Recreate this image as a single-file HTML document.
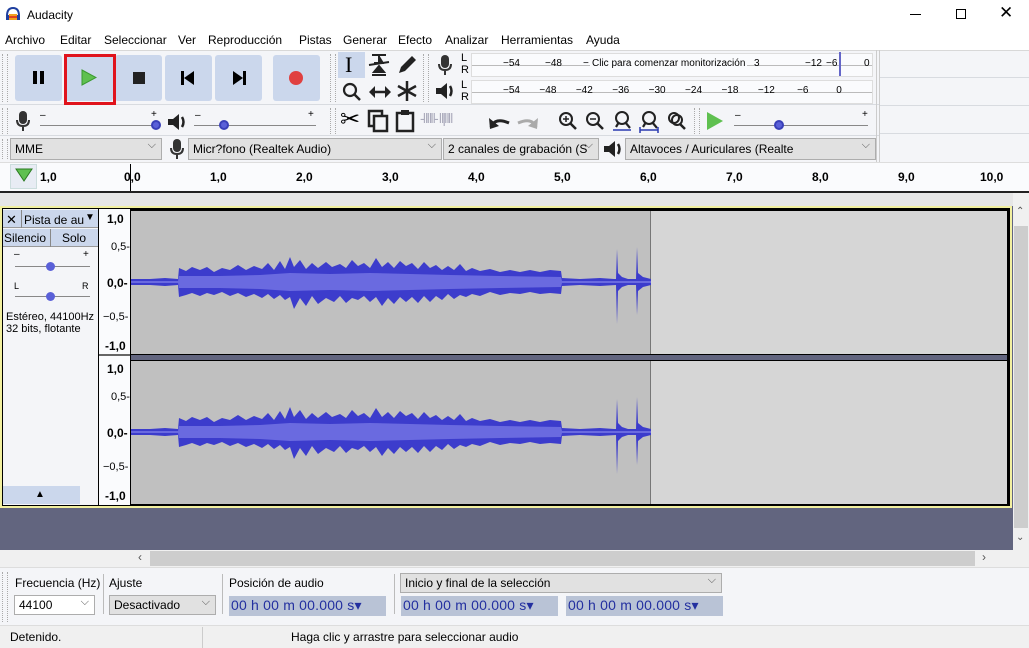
<!DOCTYPE html>
<html><head><meta charset="utf-8"><style>
*{box-sizing:border-box;margin:0;padding:0}
body{width:1029px;height:648px;overflow:hidden;background:#f0f0f0;font-family:"Liberation Sans",sans-serif;font-size:12px;color:#000;position:relative}
.a{position:absolute}
.btn{position:absolute;background:#cbd7ec;border-radius:3px}
.grip{position:absolute;width:6px;border-left:1px dotted #aaa;border-right:1px dotted #aaa}
.sel{position:absolute;background:#e1e1e1;border:1px solid #adadad;height:22px;font-size:12px;padding:3px 4px;white-space:nowrap;overflow:hidden}
.sel:after{content:"⌵";position:absolute;right:5px;top:0;color:#555;font-size:11px}
.tc{position:absolute;background:#b9c3d6;color:#2330a0;font-size:14px;height:20px;padding:1px 2px;white-space:nowrap;letter-spacing:0.2px}
.rl{position:absolute;font-size:12px;font-weight:bold;top:170px}
.sm{font-size:11px}
.m{position:absolute;font-size:10px}
</style></head><body>
<div class="a" style="left:0;top:0;width:1029px;height:30px;background:#fff"></div>
<svg class="a" style="left:5px;top:7px" width="16" height="14" viewBox="0 0 16 14"><path d="M2 9 Q2 1 8 1 Q14 1 14 9" fill="none" stroke="#1f3f9f" stroke-width="2"/><rect x="1" y="8" width="3" height="5" fill="#1f3f9f"/><rect x="12" y="8" width="3" height="5" fill="#1f3f9f"/><rect x="4" y="7" width="8" height="6" fill="#f0a020"/><rect x="4" y="9" width="8" height="2" fill="#e04020"/></svg>
<div class="a" style="left:27px;top:8px;font-size:12px">Audacity</div>
<div class="a" style="left:910px;top:14px;width:11px;height:1px;background:#000"></div>
<div class="a" style="left:956px;top:9px;width:10px;height:10px;border:1px solid #000"></div>
<div class="a" style="left:999px;top:3px;font-size:17px;font-weight:300">✕</div>
<div class="a" style="left:0;top:30px;width:1029px;height:20px;background:#fff"></div>
<div class="a" style="top:33px;left:5px">Archivo</div>
<div class="a" style="top:33px;left:60px">Editar</div>
<div class="a" style="top:33px;left:104px">Seleccionar</div>
<div class="a" style="top:33px;left:178px">Ver</div>
<div class="a" style="top:33px;left:208px">Reproducción</div>
<div class="a" style="top:33px;left:299px">Pistas</div>
<div class="a" style="top:33px;left:343px">Generar</div>
<div class="a" style="top:33px;left:398px">Efecto</div>
<div class="a" style="top:33px;left:445px">Analizar</div>
<div class="a" style="top:33px;left:501px">Herramientas</div>
<div class="a" style="top:33px;left:586px">Ayuda</div>
<div class="a" style="left:0;top:50px;width:1029px;height:113px;background:#f4f5f8;border-top:1px solid #d8d8d8"></div>
<div class="a" style="left:0;top:104px;width:880px;height:1px;background:#d8dbe0"></div>
<div class="a" style="left:0;top:135px;width:880px;height:1px;background:#d8dbe0"></div>
<div class="a" style="left:876px;top:50px;width:1px;height:112px;background:#ccc"></div>
<div class="a" style="left:879px;top:50px;width:1px;height:112px;background:#ccc"></div>
<div class="a" style="left:880px;top:77px;width:149px;height:1px;background:#d8dbe0"></div>
<div class="a" style="left:880px;top:105px;width:149px;height:1px;background:#d8dbe0"></div>
<div class="a" style="left:880px;top:133px;width:149px;height:1px;background:#d8dbe0"></div>
<div class="grip" style="left:2px;top:54px;height:48px"></div>
<div class="btn" style="left:15px;top:55px;width:47px;height:46px"></div>
<div class="btn" style="left:65px;top:55px;width:48px;height:46px"></div>
<div class="btn" style="left:115px;top:55px;width:47px;height:46px"></div>
<div class="btn" style="left:165px;top:55px;width:47px;height:46px"></div>
<div class="btn" style="left:215px;top:55px;width:47px;height:46px"></div>
<div class="btn" style="left:273px;top:55px;width:47px;height:46px"></div>
<div class="a" style="left:64px;top:54px;width:52px;height:51px;border:3px solid #e0131c"></div>
<div class="a" style="left:33px;top:71px;width:4px;height:13px;background:#000"></div>
<div class="a" style="left:40px;top:71px;width:4px;height:13px;background:#000"></div>
<svg class="a" style="left:81px;top:69px" width="16" height="17"><path d="M1 1 L15 8.5 L1 16Z" fill="#5fc050" stroke="#3a9a30"/></svg>
<div class="a" style="left:133px;top:72px;width:12px;height:12px;background:#222"></div>
<svg class="a" style="left:181px;top:71px" width="14" height="14"><rect x="0" y="0" width="3" height="14"/><path d="M13 0 L3 7 L13 14Z"/></svg>
<svg class="a" style="left:232px;top:71px" width="14" height="14"><rect x="11" y="0" width="3" height="14"/><path d="M1 0 L11 7 L1 14Z"/></svg>
<div class="a" style="left:289px;top:71px;width:14px;height:14px;border-radius:50%;background:#e04040"></div>
<div class="grip" style="left:330px;top:54px;height:48px"></div>
<div class="a" style="left:338px;top:52px;width:27px;height:26px;background:#cbd7ec"></div>
<div class="a" style="left:345px;top:52px;font-size:22px;font-family:'Liberation Serif',serif">I</div>
<svg class="a" style="left:366px;top:53px" width="27" height="24"><path d="M6 2h14M13 2v8l-5 0 5-0 5 0M3 12l20-3M8 19l5-6 5 6zM6 22h14" stroke="#222" stroke-width="2" fill="#222"/></svg>
<svg class="a" style="left:396px;top:55px" width="22" height="20"><path d="M3 18l2-6 11-11 4 4-11 11z" fill="#222"/></svg>
<svg class="a" style="left:341px;top:81px" width="22" height="22"><circle cx="9" cy="9" r="6" fill="none" stroke="#222" stroke-width="2.2"/><path d="M13 13l6 6" stroke="#222" stroke-width="2.5"/></svg>
<svg class="a" style="left:368px;top:82px" width="24" height="20"><path d="M4 10h16" stroke="#222" stroke-width="2.5"/><path d="M1 10l6-6v12zM23 10l-6-6v12z" fill="#222"/></svg>
<svg class="a" style="left:396px;top:80px" width="22" height="22"><path d="M11 1v20M2 6l18 10M2 16l18-10" stroke="#222" stroke-width="2.5"/></svg>
<div class="grip" style="left:423px;top:54px;height:48px"></div>
<svg class="a" style="left:437px;top:54px" width="16" height="22"><rect x="4" y="1" width="8" height="13" rx="4" fill="#333"/><path d="M2 10q0 6 6 6q6 0 6-6M8 16v5" fill="none" stroke="#333" stroke-width="2"/></svg>
<svg class="a" style="left:434px;top:81px" width="22" height="20"><path d="M2 7h5l6-5v16l-6-5H2z" fill="#222"/><path d="M16 5q3 5 0 10" stroke="#222" stroke-width="2.5" fill="none"/></svg>
<div class="a sm" style="left:461px;top:52px;line-height:12px">L<br>R</div>
<div class="a sm" style="left:461px;top:79px;line-height:12px">L<br>R</div>
<div class="a" style="left:471px;top:53px;width:402px;height:24px;background:#fafbfd;border:1px solid #ddd"></div>
<div class="a" style="left:471px;top:80px;width:402px;height:24px;background:#fafbfd;border:1px solid #ddd"></div>
<div class="a" style="left:472px;top:65px;width:400px;height:1px;background:#bbb"></div>
<div class="a" style="left:472px;top:92px;width:400px;height:1px;background:#bbb"></div>
<div class="a" style="left:839px;top:52px;width:2px;height:24px;background:#6466c8"></div>
<div class="m" style="left:503px;top:58px">−54</div>
<div class="m" style="left:545px;top:58px">−48</div>
<div class="m" style="left:583px;top:58px">−</div>
<div class="m" style="left:590px;top:58px;background:#fafbfd;padding:0 2px">Clic para comenzar monitorización</div>
<div class="m" style="left:754px;top:58px">3</div>
<div class="m" style="left:805px;top:58px">−12</div>
<div class="m" style="left:826px;top:58px">−6</div>
<div class="m" style="left:864px;top:58px">0</div>
<div class="a" style="left:503px;top:85px;font-size:10px;white-space:pre">−54       −48       −42       −36       −30       −24       −18       −12        −6          0</div>
<div class="grip" style="left:2px;top:108px;height:26px"></div>
<svg class="a" style="left:15px;top:110px" width="16" height="22"><rect x="4" y="1" width="8" height="13" rx="4" fill="#333"/><path d="M2 10q0 6 6 6q6 0 6-6M8 16v5" fill="none" stroke="#333" stroke-width="2"/></svg>
<div class="a" style="left:40px;top:125px;width:118px;height:1px;background:#888"></div>
<div class="a" style="left:40px;top:110px;font-size:10px">–</div><div class="a" style="left:151px;top:109px;font-size:10px">+</div>
<div class="a" style="left:151px;top:120px;width:10px;height:10px;border-radius:50%;background:#5a60d8;border:2px solid #3a40b8"></div>
<svg class="a" style="left:166px;top:112px" width="22" height="20"><path d="M2 7h5l6-5v16l-6-5H2z" fill="#222"/><path d="M16 5q3 5 0 10" stroke="#222" stroke-width="2.5" fill="none"/></svg>
<div class="a" style="left:194px;top:125px;width:122px;height:1px;background:#888"></div>
<div class="a" style="left:195px;top:110px;font-size:10px">–</div><div class="a" style="left:308px;top:109px;font-size:10px">+</div>
<div class="a" style="left:219px;top:120px;width:10px;height:10px;border-radius:50%;background:#5a60d8;border:2px solid #3a40b8"></div>
<div class="grip" style="left:330px;top:108px;height:26px"></div>
<div class="a" style="left:340px;top:106px;font-size:24px;line-height:28px">✂</div>
<svg class="a" style="left:367px;top:109px" width="24" height="24"><rect x="2" y="2" width="13" height="15" fill="none" stroke="#222" stroke-width="2.5"/><rect x="7" y="7" width="13" height="15" fill="#f4f5f8" stroke="#222" stroke-width="2.5"/></svg>
<svg class="a" style="left:394px;top:109px" width="22" height="24"><rect x="3" y="4" width="16" height="18" fill="none" stroke="#222" stroke-width="2.5"/><rect x="7" y="1" width="8" height="5" fill="#222"/></svg>
<div class="a" style="left:420px;top:110px;color:#aab;font-size:14px;letter-spacing:-2px">-‖‖‖- ‖|‖‖</div>
<svg class="a" style="left:488px;top:113px" width="24" height="18"><path d="M3 14q4-10 18-4" stroke="#222" stroke-width="3" fill="none"/><path d="M1 5l1 11 9-3z" fill="#222"/></svg>
<svg class="a" style="left:515px;top:113px" width="24" height="18"><path d="M21 14q-4-10-18-4" stroke="#aaa" stroke-width="3" fill="none"/><path d="M23 5l-1 11-9-3z" fill="#aaa"/></svg>
<svg class="a" style="left:557px;top:110px" width="22" height="22"><circle cx="9" cy="9" r="6" fill="none" stroke="#222" stroke-width="2"/><path d="M13 13l6 6" stroke="#222" stroke-width="2.5"/><path d="M6 9h6M9 6v6" stroke="#222" stroke-width="1.5"/></svg>
<svg class="a" style="left:584px;top:110px" width="22" height="22"><circle cx="9" cy="9" r="6" fill="none" stroke="#222" stroke-width="2"/><path d="M13 13l6 6" stroke="#222" stroke-width="2.5"/><path d="M6 9h6" stroke="#222" stroke-width="1.5"/></svg>
<svg class="a" style="left:611px;top:110px" width="24" height="24"><circle cx="11" cy="8" r="6" fill="none" stroke="#222" stroke-width="2"/><path d="M14 12l5 6M8 12l-3 5" stroke="#222" stroke-width="2.2"/><path d="M2 20h18" stroke="#2a3ab0" stroke-width="1.5"/></svg>
<svg class="a" style="left:638px;top:110px" width="24" height="24"><circle cx="11" cy="8" r="6" fill="none" stroke="#222" stroke-width="2"/><path d="M14 12l5 6M8 12l-3 5" stroke="#222" stroke-width="2.2"/><path d="M2 20h18M2 17v6M20 17v6" stroke="#2a3ab0" stroke-width="1.5"/></svg>
<svg class="a" style="left:666px;top:110px" width="22" height="22"><circle cx="8" cy="8" r="5" fill="none" stroke="#222" stroke-width="2"/><circle cx="11" cy="10" r="5" fill="none" stroke="#222" stroke-width="2"/><path d="M14 14l5 5" stroke="#222" stroke-width="2.5"/></svg>
<div class="grip" style="left:694px;top:108px;height:26px"></div>
<svg class="a" style="left:706px;top:111px" width="18" height="20"><path d="M1 1L17 10 1 19z" fill="#5fc050"/></svg>
<div class="a" style="left:734px;top:125px;width:134px;height:1px;background:#888"></div>
<div class="a" style="left:735px;top:110px;font-size:10px">–</div><div class="a" style="left:862px;top:109px;font-size:10px">+</div>
<div class="a" style="left:774px;top:120px;width:10px;height:10px;border-radius:50%;background:#5a60d8;border:2px solid #3a40b8"></div>
<div class="grip" style="left:2px;top:139px;height:20px"></div>
<div class="sel" style="left:10px;top:138px;width:152px">MME</div>
<svg class="a" style="left:169px;top:138px" width="16" height="22"><rect x="4" y="1" width="8" height="13" rx="4" fill="#333"/><path d="M2 10q0 6 6 6q6 0 6-6M8 16v5" fill="none" stroke="#333" stroke-width="2"/></svg>
<div class="sel" style="left:188px;top:138px;width:254px">Micr?fono (Realtek Audio)</div>
<div class="sel" style="left:443px;top:138px;width:156px">2 canales de grabación (S</div>
<svg class="a" style="left:602px;top:139px" width="22" height="20"><path d="M2 7h5l6-5v16l-6-5H2z" fill="#222"/><path d="M16 5q3 5 0 10" stroke="#222" stroke-width="2.5" fill="none"/></svg>
<div class="sel" style="left:625px;top:138px;width:251px">Altavoces / Auriculares (Realte</div>
<div class="a" style="left:0;top:162px;width:1029px;height:30px;background:#fafbfd;border-top:1px solid #ddd"></div>
<div class="a" style="left:0;top:191px;width:1029px;height:2px;background:#222"></div>
<div class="a" style="left:10px;top:164px;width:27px;height:25px;background:#e8ecf4;border:1px solid #cdd"></div>
<svg class="a" style="left:15px;top:168px" width="18" height="14"><path d="M1 1h16L9 13z" fill="#5fc050" stroke="#2a7a20"/></svg>
<div class="rl" style="left:40px">1,0</div>
<div class="rl" style="left:124px">0,0</div>
<div class="a" style="left:130px;top:164px;width:1px;height:27px;background:#000"></div>
<div class="rl" style="left:210px">1,0</div>
<div class="rl" style="left:296px">2,0</div>
<div class="rl" style="left:382px">3,0</div>
<div class="rl" style="left:468px">4,0</div>
<div class="rl" style="left:554px">5,0</div>
<div class="rl" style="left:640px">6,0</div>
<div class="rl" style="left:726px">7,0</div>
<div class="rl" style="left:812px">8,0</div>
<div class="rl" style="left:898px">9,0</div>
<div class="rl" style="left:980px">10,0</div>
<div class="a" style="left:0;top:193px;width:1013px;height:13px;background:#e6e6e6"></div>
<div class="a" style="left:0;top:206px;width:1013px;height:344px;background:#62657f"></div>
<div class="a" style="left:0;top:206px;width:1012px;height:302px;border:2px solid #f2f0a0;background:#000"></div>
<div class="a" style="left:3px;top:209px;width:95px;height:296px;background:#f4f5f8"></div>
<div class="a" style="left:3px;top:210px;width:95px;height:18px;background:#cbd7ec;border-bottom:1px solid #999"></div>
<div class="a" style="left:6px;top:212px;font-size:13px">✕</div>
<div class="a" style="left:21px;top:210px;width:1px;height:18px;background:#888"></div>
<div class="a" style="left:24px;top:213px">Pista de au</div>
<div class="a" style="left:85px;top:212px;font-size:10px">▼</div>
<div class="a" style="left:3px;top:229px;width:95px;height:18px;background:#cbd7ec;border-bottom:1px solid #999"></div>
<div class="a" style="left:4px;top:231px">Silencio</div>
<div class="a" style="left:50px;top:229px;width:1px;height:18px;background:#888"></div>
<div class="a" style="left:62px;top:231px">Solo</div>
<div class="a" style="left:14px;top:249px;font-size:10px">–</div><div class="a" style="left:83px;top:249px;font-size:10px">+</div>
<div class="a" style="left:15px;top:266px;width:75px;height:1px;background:#888"></div>
<div class="a" style="left:46px;top:262px;width:9px;height:9px;border-radius:50%;background:#5a60d8"></div>
<div class="a" style="left:14px;top:281px;font-size:9px">L</div><div class="a" style="left:82px;top:281px;font-size:9px">R</div>
<div class="a" style="left:15px;top:296px;width:75px;height:1px;background:#888"></div>
<div class="a" style="left:46px;top:292px;width:9px;height:9px;border-radius:50%;background:#5a60d8"></div>
<div class="a" style="left:6px;top:311px;line-height:12px;font-size:11px">Estéreo, 44100Hz<br>32 bits, flotante</div>
<div class="a" style="left:3px;top:486px;width:77px;height:18px;background:#cbd7ec"></div>
<div class="a" style="left:35px;top:489px;font-size:10px">▲</div>
<div class="a" style="left:99px;top:209px;width:31px;height:296px;background:#fafbfd"></div>
<div class="a" style="left:99px;top:354px;width:31px;height:2px;background:#666"></div>
<div class="a" style="left:107px;top:212px;font-weight:bold">1,0</div>
<div class="a" style="left:111px;top:241px;font-size:11px">0,5-</div>
<div class="a" style="left:107px;top:276px;font-weight:bold">0,0-</div>
<div class="a" style="left:103px;top:311px;font-size:11px">−0,5-</div>
<div class="a" style="left:105px;top:339px;font-weight:bold">-1,0</div>
<div class="a" style="left:107px;top:362px;font-weight:bold">1,0</div>
<div class="a" style="left:111px;top:391px;font-size:11px">0,5-</div>
<div class="a" style="left:107px;top:426px;font-weight:bold">0,0-</div>
<div class="a" style="left:103px;top:461px;font-size:11px">−0,5-</div>
<div class="a" style="left:105px;top:489px;font-weight:bold">-1,0</div>
<div class="a" style="left:131px;top:211px;width:876px;height:143px;background:#d6d6d6"></div>
<div class="a" style="left:131px;top:211px;width:520px;height:143px;background:#c0c0c0;border-right:1px solid #777"></div>
<div class="a" style="left:131px;top:354px;width:876px;height:7px;background:#62657f;border-top:1px solid #000;border-bottom:1px solid #000"></div>
<div class="a" style="left:131px;top:361px;width:876px;height:143px;background:#d6d6d6"></div>
<div class="a" style="left:131px;top:361px;width:520px;height:143px;background:#c0c0c0;border-right:1px solid #777"></div>
<svg class="a" style="left:0;top:0" width="1029" height="648">
<defs><g id="w">
<polygon fill="#3c3ccc" points="131,-3 150,-3 165,-4 178,-3 179,-14 186,-11 192,-15 200,-12 207,-15 214,-10 222,-14 230,-12 238,-17 246,-12 254,-16 262,-13 268,-19 274,-12 280,-21 285,-13 290,-25 294,-15 300,-22 306,-13 312,-19 318,-14 326,-20 332,-15 340,-18 346,-14 352,-22 358,-16 364,-19 370,-14 376,-24 382,-15 388,-20 394,-14 400,-21 406,-16 412,-19 418,-13 424,-20 430,-14 436,-17 442,-12 448,-16 454,-12 460,-18 466,-11 472,-14 480,-11 490,-13 500,-10 510,-12 520,-10 530,-12 540,-10 550,-12 561,-11 562,-4 580,-3 600,-4 614,-3 616,-3 617,-33 618,-9 622,-5 628,-3 636,-3 637,-35 638,-9 643,-5 651,-3 651,3 643,5 638,9 637,33 636,3 628,3 622,5 618,9 617,42 616,3 600,4 580,3 562,4 561,12 550,11 540,12 530,10 520,12 510,11 500,13 490,10 480,14 472,12 466,15 460,13 454,17 448,12 442,18 436,14 430,20 424,14 418,21 412,15 406,20 400,15 394,22 388,16 382,24 376,15 370,20 364,14 358,18 352,16 346,21 340,14 334,20 326,16 318,22 312,14 306,24 300,16 294,27 290,15 285,18 280,13 274,17 268,12 262,16 254,12 246,15 238,11 230,14 222,10 214,13 207,11 200,14 192,11 186,13 179,15 178,3 165,4 150,3 131,3"/>
<polygon fill="#6a6ae0" points="131,-1 178,-1 179,-6 220,-6 260,-7 290,-9 330,-8 370,-9 410,-8 450,-7 500,-6 561,-5 562,-1 651,-1 651,1 562,1 561,5 500,6 450,7 410,8 370,9 330,8 290,9 260,7 220,6 179,6 178,1 131,1"/>
</g></defs>
<use href="#w" transform="translate(0,282)"/>
<use href="#w" transform="translate(0,432)"/>
</svg>
<div class="a" style="left:1013px;top:206px;width:16px;height:344px;background:#f0f0f0"></div>
<div class="a" style="left:1014px;top:226px;width:14px;height:302px;background:#cdcdcd"></div>
<div class="a" style="left:1016px;top:206px;font-size:10px;color:#555">⌃</div>
<div class="a" style="left:1016px;top:532px;font-size:10px;color:#555">⌄</div>
<div class="a" style="left:0;top:550px;width:1029px;height:17px;background:#f0f0f0"></div>
<div class="a" style="left:150px;top:551px;width:825px;height:15px;background:#cdcdcd"></div>
<div class="a" style="left:138px;top:550px;font-size:12px;color:#555">‹</div>
<div class="a" style="left:982px;top:550px;font-size:12px;color:#555">›</div>
<div class="a" style="left:0;top:567px;width:1029px;height:59px;background:#f4f5f8;border-top:1px solid #ddd;border-bottom:1px solid #ddd"></div>
<div class="grip" style="left:2px;top:572px;height:50px"></div>
<div class="a" style="left:15px;top:576px">Frecuencia (Hz)</div>
<div class="a" style="left:103px;top:574px;width:1px;height:40px;background:#bbb"></div>
<div class="a" style="left:109px;top:576px">Ajuste</div>
<div class="a" style="left:222px;top:574px;width:1px;height:40px;background:#bbb"></div>
<div class="a" style="left:229px;top:576px">Posición de audio</div>
<div class="a" style="left:394px;top:574px;width:1px;height:40px;background:#bbb"></div>
<div class="sel" style="left:400px;top:573px;width:322px;height:20px;padding-top:2px">Inicio y final de la selección</div>
<div class="sel" style="left:14px;top:595px;width:81px;height:20px;padding-top:2px;background:#fff">44100</div>
<div class="sel" style="left:109px;top:595px;width:107px;height:20px;padding-top:2px">Desactivado</div>
<div class="tc" style="left:229px;top:596px;width:157px">00 h 00 m 00.000 s▾</div>
<div class="tc" style="left:401px;top:596px;width:157px">00 h 00 m 00.000 s▾</div>
<div class="tc" style="left:566px;top:596px;width:157px">00 h 00 m 00.000 s▾</div>
<div class="a" style="left:0;top:627px;width:1029px;height:21px;background:#f0f0f0"></div>
<div class="a" style="left:10px;top:630px">Detenido.</div>
<div class="a" style="left:202px;top:627px;width:1px;height:21px;background:#ccc"></div>
<div class="a" style="left:291px;top:630px">Haga clic y arrastre para seleccionar audio</div>
</body></html>
